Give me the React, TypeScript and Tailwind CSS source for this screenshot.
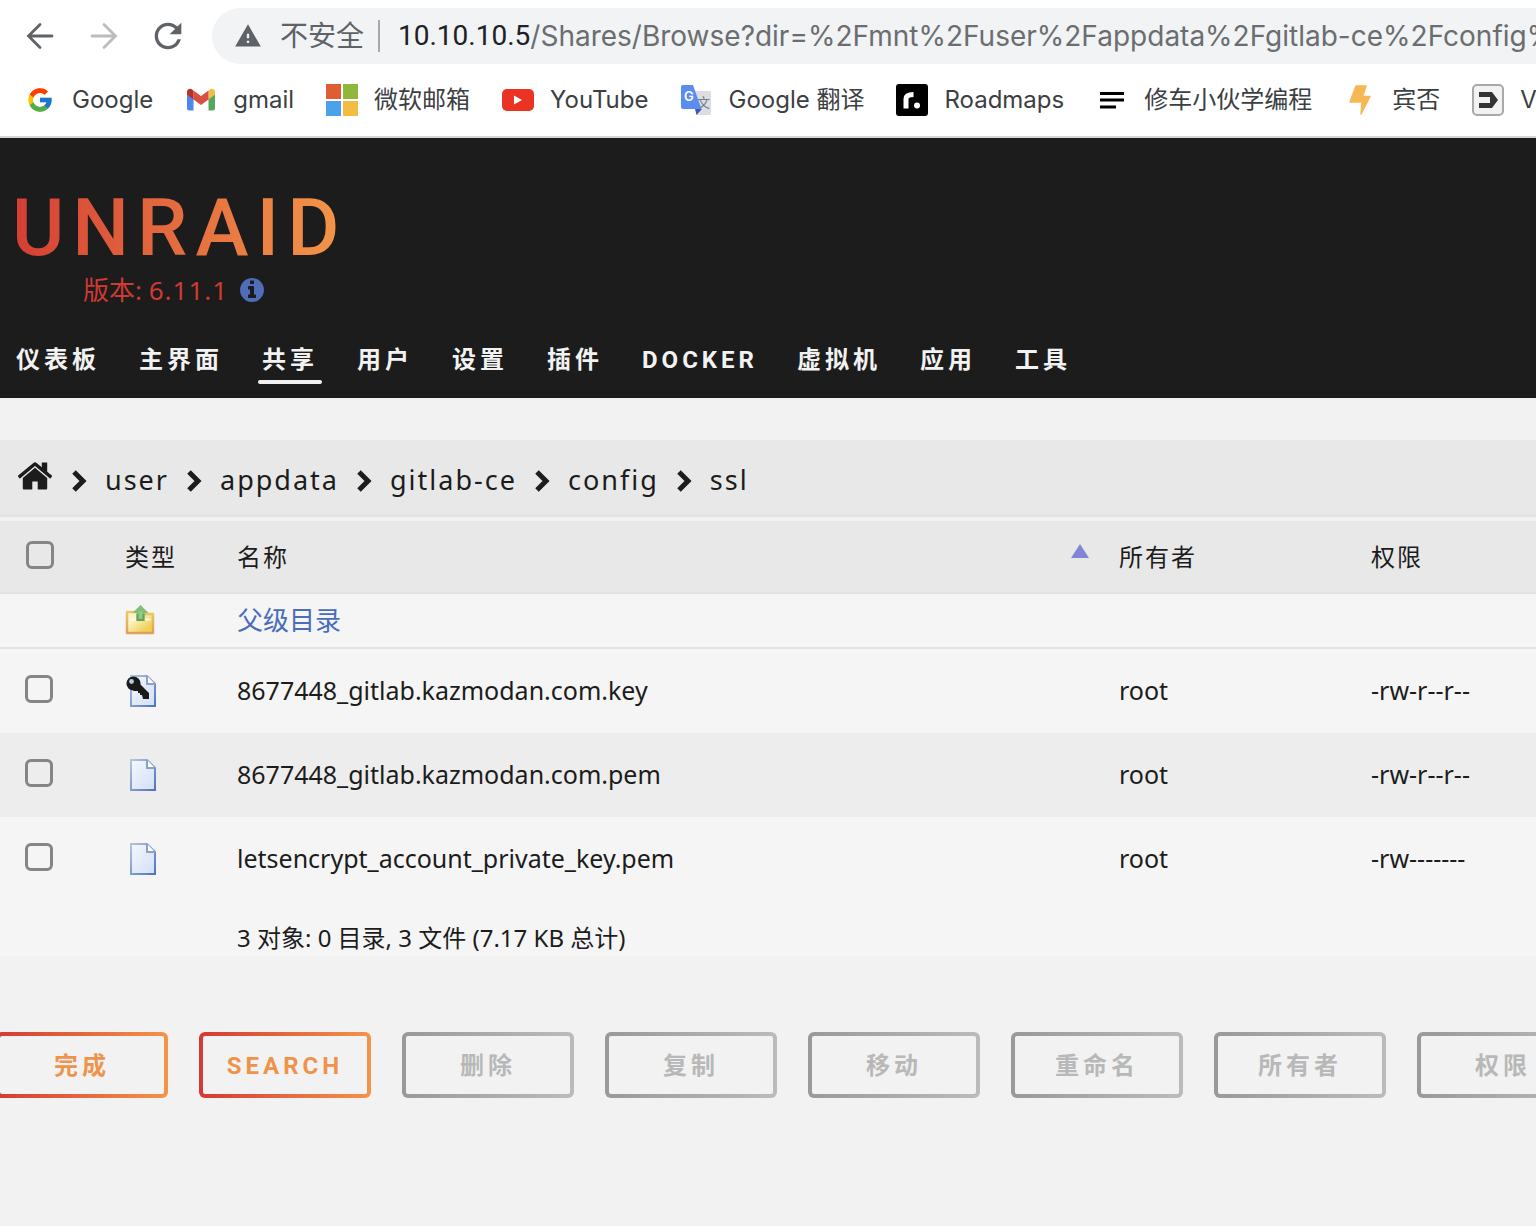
import { useState } from 'react'
import type { ReactNode } from 'react'
import { FcGoogle } from 'react-icons/fc'
import { MdRefresh, MdWarning } from 'react-icons/md'

const files = [
  { name: '8677448_gitlab.kazmodan.com.key', owner: 'root', mode: '-rw-r--r--', isKey: true },
  { name: '8677448_gitlab.kazmodan.com.pem', owner: 'root', mode: '-rw-r--r--', isKey: false },
  { name: 'letsencrypt_account_private_key.pem', owner: 'root', mode: '-rw-------', isKey: false },
]

const navItems = ['仪表板', '主界面', '共享', '用户', '设置', '插件', 'DOCKER', '虚拟机', '应用', '工具']
const crumbs = ['user', 'appdata', 'gitlab-ce', 'config', 'ssl']
const actions = ['删除', '复制', '移动', '重命名', '所有者', '权限']

function GmailIcon() {
  return (
    <svg viewBox="0 0 32 32" className="size-8">
      <path d="M2 10v14.500a2 2 0 0 0 2 2h4.500V14z" fill="#4f86ec" />
      <path d="M30 10v14.500a2 2 0 0 1-2 2h-4.500V14z" fill="#58a55c" />
      <path d="M23.500 7v8.500L30 10.500V8c0-3-3.300-4-5.200-2.500z" fill="#f2bf42" />
      <path d="M8.500 15.500V6.500L16 12l7.500-5.500v9L16 21z" fill="#d95040" />
      <path d="M2 8v2.500l6.500 5V6.800L7.200 5.500C5.300 4 2 5 2 8z" fill="#b2342a" />
    </svg>
  )
}

function MicrosoftIcon() {
  return (
    <svg viewBox="0 0 32 32" className="size-8">
      <rect width="15" height="15" fill="#e05c35" />
      <rect x="17" width="15" height="15" fill="#8fb73b" />
      <rect y="17" width="15" height="15" fill="#4ba1ea" />
      <rect x="17" y="17" width="15" height="15" fill="#f3bc42" />
    </svg>
  )
}

function YouTubeIcon() {
  return (
    <svg viewBox="0 0 32 32" className="size-8">
      <rect y="5" width="32" height="22" rx="5" fill="#ea3323" />
      <path d="M12 11.500v9l8-4.500z" fill="#fff" />
    </svg>
  )
}

function TranslateIcon() {
  return (
    <svg viewBox="0 0 32 32" className="size-8">
      <path d="M13 7h16.500a1.500 1.500 0 0 1 1.500 1.500v21a1.500 1.500 0 0 1-1.500 1.500H17z" fill="#dddddf" />
      <path d="M15 25h7l-5.500 6z" fill="#3d56b8" />
      <text x="17" y="23" fontSize="13" fill="#6e7f92">文</text>
      <path d="M3 1h10l8.500 24H3a2 2 0 0 1-2-2V3a2 2 0 0 1 2-2z" fill="#5b8dee" />
      <text x="4" y="17" fontSize="13" fontWeight="600" fill="#fff">G</text>
    </svg>
  )
}

function RoadmapIcon() {
  return (
    <svg viewBox="0 0 32 32" className="size-8">
      <rect width="32" height="32" rx="3" fill="#000" />
      <path d="M10 24.500V15q0-4.500 7.500-4.500" fill="none" stroke="#fff" strokeWidth="5" />
      <circle cx="21" cy="21.500" r="3" fill="#fff" />
    </svg>
  )
}

function LinesIcon() {
  return (
    <svg viewBox="0 0 32 32" className="size-8" stroke="#000" strokeWidth="3">
      <path d="M4 9.500h24M4 16h24M4 23h16" />
    </svg>
  )
}

function BoltIcon() {
  return (
    <svg viewBox="0 0 32 32" className="size-8">
      <path
        d="M12 2h10l-3.500 10.500H26L17 30l1-12H6z"
        fill="#f5b855"
        stroke="#f5b855"
        strokeWidth="1.500"
        strokeLinejoin="round"
      />
    </svg>
  )
}

function ArrowBadgeIcon() {
  return (
    <svg viewBox="0 0 32 32" className="size-8">
      <rect x="1" y="1" width="30" height="30" rx="4" fill="#f2f2f2" stroke="#a9a9a9" strokeWidth="2" />
      <path d="M7 8h13l6 8-6 8H7v-5h11v-6H7z" fill="#333" />
    </svg>
  )
}

const bookmarks: { label: string; icon: ReactNode }[] = [
  { label: 'Google', icon: <FcGoogle className="size-7" /> },
  { label: 'gmail', icon: <GmailIcon /> },
  { label: '微软邮箱', icon: <MicrosoftIcon /> },
  { label: 'YouTube', icon: <YouTubeIcon /> },
  { label: 'Google 翻译', icon: <TranslateIcon /> },
  { label: 'Roadmaps', icon: <RoadmapIcon /> },
  { label: '修车小伙学编程', icon: <LinesIcon /> },
  { label: '宾否', icon: <BoltIcon /> },
  { label: 'V', icon: <ArrowBadgeIcon /> },
]

function BrowserBar() {
  return (
    <div className="border-b-2 border-[#d5d6d8] bg-white font-['Inter','Noto_Sans_CJK_SC',sans-serif]">
      <div className="flex items-center pt-2 pl-5">
        <button type="button" aria-label="Back" className="mr-6 text-[#5f6368]">
          <svg viewBox="0 0 40 40" className="size-10" fill="none" stroke="currentColor" strokeWidth="2.800" strokeLinecap="round">
            <path d="M32 20H8.500M20 8.500L8.500 20 20 31.500" />
          </svg>
        </button>
        <button type="button" aria-label="Forward" className="mr-6 text-[#babcbe]">
          <svg viewBox="0 0 40 40" className="size-10" fill="none" stroke="currentColor" strokeWidth="2.800" strokeLinecap="round">
            <path d="M8 20h23.500M20 8.500L31.500 20 20 31.500" />
          </svg>
        </button>
        <button type="button" aria-label="Reload" className="mr-6 text-[#5f6368]">
          <MdRefresh className="size-10" />
        </button>
        <div className="flex h-14 min-w-0 flex-1 items-center rounded-l-full bg-[#f1f3f4] pl-[22px] text-[28px]">
          <MdWarning className="mr-[18px] size-7 shrink-0 text-[#5f6368]" />
          <span className="shrink-0 text-[#5f6368]">不安全</span>
          <span className="mr-[18px] ml-3.5 h-8 w-0.5 shrink-0 bg-[#a5a8ab]" />
          <label htmlFor="address" className="shrink-0 font-['Roboto',sans-serif] text-[#202124]">10.10.10.5</label>
          <input
            id="address"
            type="text"
            defaultValue="/Shares/Browse?dir=%2Fmnt%2Fuser%2Fappdata%2Fgitlab-ce%2Fconfig%2Fssl"
            className="min-w-0 flex-1 bg-transparent text-[#6b6d70] outline-none"
          />
        </div>
      </div>
      <div className="flex h-18 items-center gap-8 overflow-hidden pl-6 text-2xl text-[#3c4043]">
        {bookmarks.map((b) => (
          <a key={b.label} href="#" className="flex shrink-0 items-center gap-4 whitespace-nowrap">
            <span className="flex size-8 items-center justify-center">{b.icon}</span>
            {b.label}
          </a>
        ))}
      </div>
    </div>
  )
}

function Header() {
  return (
    <header className="bg-[#1c1c1c] pt-[50px] text-[#f2f2f2]">
      <div className="ml-3 w-fit">
        <a
          href="#"
          className="block bg-linear-to-r from-[#d43d35] to-[#f39649] bg-clip-text font-['Roboto',sans-serif] text-[80px] leading-20 font-medium tracking-widest text-transparent"
        >
          UNRAID
        </a>
        <div className="flex h-11 items-center gap-2.5 pl-[71px] text-[26px] text-[#cf3a32]">
          <span>
            版本: <span className="tracking-[1px]">6.11.1</span>
          </span>
          <button type="button" aria-label="Release notes">
            <svg viewBox="0 0 1792 1792" className="size-7 fill-[#4f6db8]">
              <path d="M1152 1376v-160q0-14-9-23t-23-9h-96v-512q0-14-9-23t-23-9h-320q-14 0-23 9t-9 23v160q0 14 9 23t23 9h96v320h-96q-14 0-23 9t-9 23v160q0 14 9 23t23 9h448q14 0 23-9t9-23zm-128-896v-160q0-14-9-23t-23-9h-192q-14 0-23 9t-9 23v160q0 14 9 23t23 9h192q14 0 23-9t9-23zm640 416q0 209-103 385.500t-279.500 279.500-385.500 103-385.500-103-279.500-279.500-103-385.500 103-385.500 279.500-279.500 385.500-103 385.500 103 279.500 279.500 103 385.500z" />
            </svg>
          </button>
        </div>
      </div>
      <nav className="mt-8 flex gap-[31px] overflow-hidden pb-3.5 pl-3 font-['Roboto','Noto_Sans_CJK_SC',sans-serif] text-2xl font-bold tracking-[4px]">
        {navItems.map((item) => (
          <a key={item} href="#" className="shrink-0 whitespace-nowrap">
            <span className="block px-1">{item}</span>
            {item === '共享' && <span className="mt-1 block h-1 rounded-full bg-[#f2f2f2]" />}
          </a>
        ))}
      </nav>
    </header>
  )
}

function Breadcrumb() {
  return (
    <div className="mt-[42px] flex h-[77px] items-center border-b-2 border-[#e2e2e2] bg-[#e8e8e8] pt-1.5 pl-4 text-[27px] tracking-[2px]">
      <a href="#" aria-label="Home" className="mb-2.5">
        <svg viewBox="0 0 1792 1792" className="size-[38px] fill-current">
          <path d="M1472 992v480q0 26-19 45t-45 19h-384v-384h-256v384h-384q-26 0-45-19t-19-45v-480q0-1 .5-3t.5-3l575-474 575 474q1 2 1 6zm223-69l-62 74q-8 9-21 11h-3q-13 0-21-7l-692-577-692 577q-12 8-24 7-13-2-21-11l-62-74q-8-10-7-23.500t11-21.500l719-599q32-26 76-26t76 26l244 204v-195q0-14 9-23t23-9h192q14 0 23 9t9 23v408l219 182q10 8 11 21.500t-7 23.500z" />
        </svg>
      </a>
      {crumbs.map((c) => (
        <span key={c} className="flex items-center">
          <svg viewBox="0 0 16 24" className="mr-[18px] ml-[17px] h-6 w-4" fill="none" stroke="currentColor" strokeWidth="5">
            <path d="M3 3l9 9-9 9" />
          </svg>
          <a href="#">{c}</a>
        </span>
      ))}
    </div>
  )
}

function FolderUpIcon() {
  return (
    <svg viewBox="0 0 32 32" className="size-8">
      <defs>
        <linearGradient id="folder" x1="0" y1="0" x2="1" y2="1">
          <stop offset="0.3" stopColor="#fdf3c6" />
          <stop offset="0.8" stopColor="#efd04f" />
        </linearGradient>
        <linearGradient id="folder-edge" x1="0" y1="0" x2="0" y2="1">
          <stop offset="0" stopColor="#ecc964" />
          <stop offset="1" stopColor="#dd9f5c" />
        </linearGradient>
      </defs>
      <path d="M2 7h10l2 2h14v19H2z" fill="url(#folder)" stroke="url(#folder-edge)" strokeWidth="2.500" strokeLinejoin="round" />
      <path d="M4.500 14.500h21" fill="none" stroke="#fffbe6" strokeWidth="2" />
      <path d="M15.500 0l8 8h-4v8h-8V8h-4z" fill="#82bd75" />
      <path d="M11.500 9h8v7h-8z" fill="#62a05b" />
      <path d="M13.500 6h4v8h-4z" fill="#8ecb80" />
    </svg>
  )
}

function FileIcon({ isKey }: { isKey: boolean }) {
  return (
    <svg viewBox="0 0 32 32" className="size-8">
      <defs>
        <linearGradient id="paper" x1="0" y1="0" x2="1" y2="1">
          <stop offset="0" stopColor="#f3f8ff" />
          <stop offset="1" stopColor="#d3dff6" />
        </linearGradient>
        <linearGradient id="paper-edge" x1="0" y1="0" x2="1" y2="1">
          <stop offset="0" stopColor="#b5c3dc" />
          <stop offset="1" stopColor="#4f74bf" />
        </linearGradient>
      </defs>
      <path d="M6 1h16l8 8v22H6z" fill="url(#paper)" stroke="url(#paper-edge)" strokeWidth="2" />
      <path d="M22 1v8h8" fill="#fff" stroke="#8ba1c4" strokeWidth="2" />
      {isKey && (
        <>
          <path d="M14 8l10 10v6h-6l-1-4h-2v-2h-2v-2H8z" fill="#1a1a1a" />
          <circle cx="8.500" cy="8.500" r="7" fill="#1a1a1a" />
          <circle cx="6.500" cy="6.500" r="2.400" fill="#b9cbe4" />
        </>
      )}
    </svg>
  )
}

const checkboxClass =
  'block size-7 appearance-none rounded-md border-3 border-[#858585] checked:bg-[#858585]'

function FileTable() {
  const [selected, setSelected] = useState<string[]>([])

  const toggle = (name: string) => {
    setSelected((prev) => (prev.includes(name) ? prev.filter((n) => n !== name) : [...prev, name]))
  }

  return (
    <table className="mt-1 w-full table-fixed border-separate border-spacing-0 bg-[#f5f5f5] text-left text-[25px]">
      <colgroup>
        <col className="w-[125px]" />
        <col className="w-28" />
        <col />
        <col className="w-[252px]" />
        <col className="w-[165px]" />
      </colgroup>
      <thead className="bg-[#e8e8e8] text-2xl tracking-[2px]">
        <tr className="h-[73px] *:border-b-2 *:border-[#e2e2e2]">
          <th className="pb-1 pl-[26px]">
            <input
              type="checkbox"
              aria-label="Select all"
              className={checkboxClass}
              checked={selected.length === files.length}
              onChange={(e) => setSelected(e.target.checked ? files.map((f) => f.name) : [])}
            />
          </th>
          <th className="font-normal">类型</th>
          <th className="font-normal">
            <span className="flex items-center justify-between pr-[30px]">
              名称
              <svg viewBox="0 0 18 14" className="mb-3 h-3.5 w-[18px]">
                <path d="M9 0l9 14H0z" fill="#8085d8" />
              </svg>
            </span>
          </th>
          <th className="font-normal">所有者</th>
          <th className="font-normal">权限</th>
        </tr>
      </thead>
      <tbody>
        <tr className="h-[55px] *:border-b-2 *:border-[#e2e2e2]">
          <td />
          <td>
            <FolderUpIcon />
          </td>
          <td className="text-[26px]">
            <a href="#" className="text-[#486dba]">父级目录</a>
          </td>
          <td />
          <td />
        </tr>
        {files.map((f) => (
          <tr key={f.name} className="h-21 even:bg-[#f5f5f5] odd:bg-[#ededed]">
            <td className="pb-1 pl-[25px]">
              <input
                type="checkbox"
                aria-label={f.name}
                className={checkboxClass}
                checked={selected.includes(f.name)}
                onChange={() => toggle(f.name)}
              />
            </td>
            <td>
              <FileIcon isKey={f.isKey} />
            </td>
            <td>{f.name}</td>
            <td>{f.owner}</td>
            <td>{f.mode}</td>
          </tr>
        ))}
      </tbody>
      <tfoot>
        <tr className="h-[55px] text-2xl">
          <td />
          <td />
          <td colSpan={3} className="pt-[19px]">3 对象: 0 目录, 3 文件 (7.17 KB 总计)</td>
        </tr>
      </tfoot>
    </table>
  )
}

const buttonClass =
  "h-[66px] w-[172px] shrink-0 rounded-md border-4 border-transparent pt-0.5 font-['Roboto','Noto_Sans_CJK_SC',sans-serif] text-2xl font-bold tracking-[4px]"
const activeClass =
  'text-[#f0934a] [background:linear-gradient(#f2f2f2,#f2f2f2)_padding-box,linear-gradient(90deg,#d43a33,#f39448)_border-box]'
const disabledClass =
  'text-[#b8b8b8] [background:linear-gradient(#f2f2f2,#f2f2f2)_padding-box,linear-gradient(90deg,#999999,#bbbbbb)_border-box]'

export default function App() {
  return (
    <div className="min-h-screen overflow-hidden bg-[#f2f2f2] font-['Noto_Sans','Noto_Sans_CJK_SC',sans-serif] text-[#1c1c1c]">
      <BrowserBar />
      <Header />
      <main>
        <Breadcrumb />
        <FileTable />
        <div className="mt-19 -ml-1 flex gap-[31px]">
          <button type="button" className={`${buttonClass} ${activeClass}`}>完成</button>
          <button type="button" className={`${buttonClass} ${activeClass}`}>SEARCH</button>
          {actions.map((a) => (
            <button key={a} type="button" disabled className={`${buttonClass} ${disabledClass}`}>{a}</button>
          ))}
        </div>
      </main>
    </div>
  )
}
